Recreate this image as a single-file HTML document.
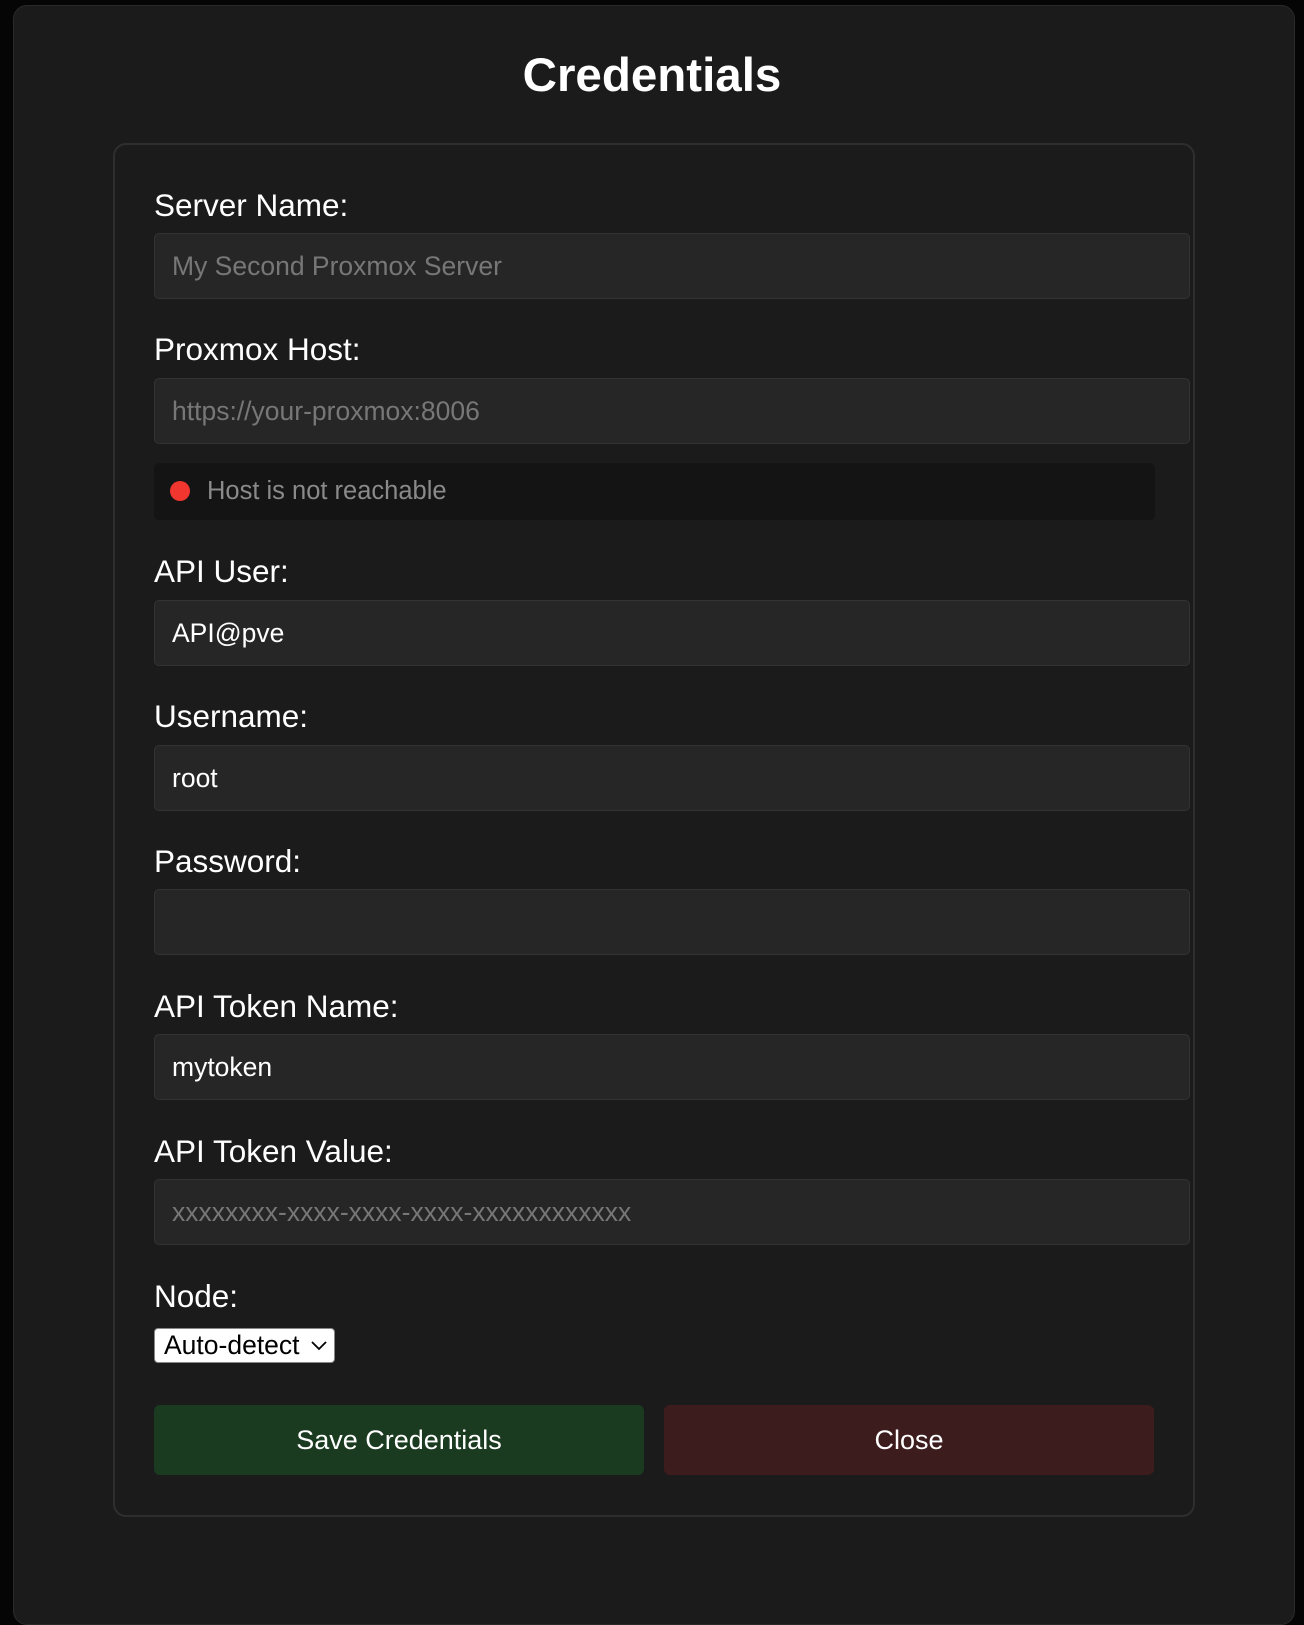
<!DOCTYPE html>
<html><head><meta charset="utf-8"><style>
*{box-sizing:border-box;margin:0;padding:0}
html,body{width:1304px;height:1596px;background:#050505;overflow:hidden;font-family:"Liberation Sans",sans-serif}
.panel{position:absolute;left:13px;top:5px;width:1282px;height:1620px;background:#1b1b1c;border:1px solid #2a2a2a;border-radius:14px}
h1{position:absolute;left:0;width:1304px;top:48px;text-align:center;color:#fff;font-size:47.5px;font-weight:bold}
.card{position:absolute;left:113px;top:143px;width:1082px;height:1374px;border:2px solid #2e2e2e;border-radius:13px}
.lbl{position:absolute;left:154px;color:#fff;font-size:31.5px;line-height:34px}
.in{position:absolute;left:154px;width:1036px;height:66px;background:#262627;border:1px solid #333;border-radius:5px;color:#fff;font-size:26.5px;line-height:64px;padding-left:17px}
.ph{color:#777}
.status{position:absolute;left:154px;top:463px;width:1001px;height:57px;background:#141414;border-radius:5px}
.dot{position:absolute;left:170px;top:481px;width:20px;height:20px;border-radius:50%;background:#f0362f}
.st{position:absolute;left:207px;top:477px;font-size:25.5px;color:#8a8a8a;line-height:28px}
.sel{position:absolute;left:154px;top:1328px;width:181px;height:35px;background:#fff;border:1px solid #888;border-radius:4px;color:#000;font-size:26.5px;line-height:33px;padding-left:9px}
.btn{position:absolute;top:1405px;height:70px;width:490px;border-radius:6px;color:#fff;font-size:27px;text-align:center;line-height:70px}
</style></head><body>
<div class="panel"></div>
<h1>Credentials</h1>
<div class="card"></div>
<div class="lbl" style="top:188px">Server Name:</div>
<div class="in ph" style="top:233px">My Second Proxmox Server</div>
<div class="lbl" style="top:332px">Proxmox Host:</div>
<div class="in ph" style="top:378px">https://your-proxmox:8006</div>
<div class="status"></div><div class="dot"></div><div class="st">Host is not reachable</div>
<div class="lbl" style="top:554px">API User:</div>
<div class="in" style="top:600px">API@pve</div>
<div class="lbl" style="top:699px">Username:</div>
<div class="in" style="top:745px">root</div>
<div class="lbl" style="top:844px">Password:</div>
<div class="in" style="top:889px"></div>
<div class="lbl" style="top:989px">API Token Name:</div>
<div class="in" style="top:1034px">mytoken</div>
<div class="lbl" style="top:1134px">API Token Value:</div>
<div class="in ph" style="top:1179px">xxxxxxxx-xxxx-xxxx-xxxx-xxxxxxxxxxxx</div>
<div class="lbl" style="top:1279px">Node:</div>
<div class="sel">Auto-detect<svg style="position:absolute;right:7px;top:12px" width="16" height="10" viewBox="0 0 16 10"><path d="M1 1l7 7 7-7" fill="none" stroke="#000" stroke-width="1.8"/></svg></div>
<div class="btn" style="left:154px;background:#1a3b20">Save Credentials</div>
<div class="btn" style="left:664px;background:#3d1c1d">Close</div>
</body></html>
